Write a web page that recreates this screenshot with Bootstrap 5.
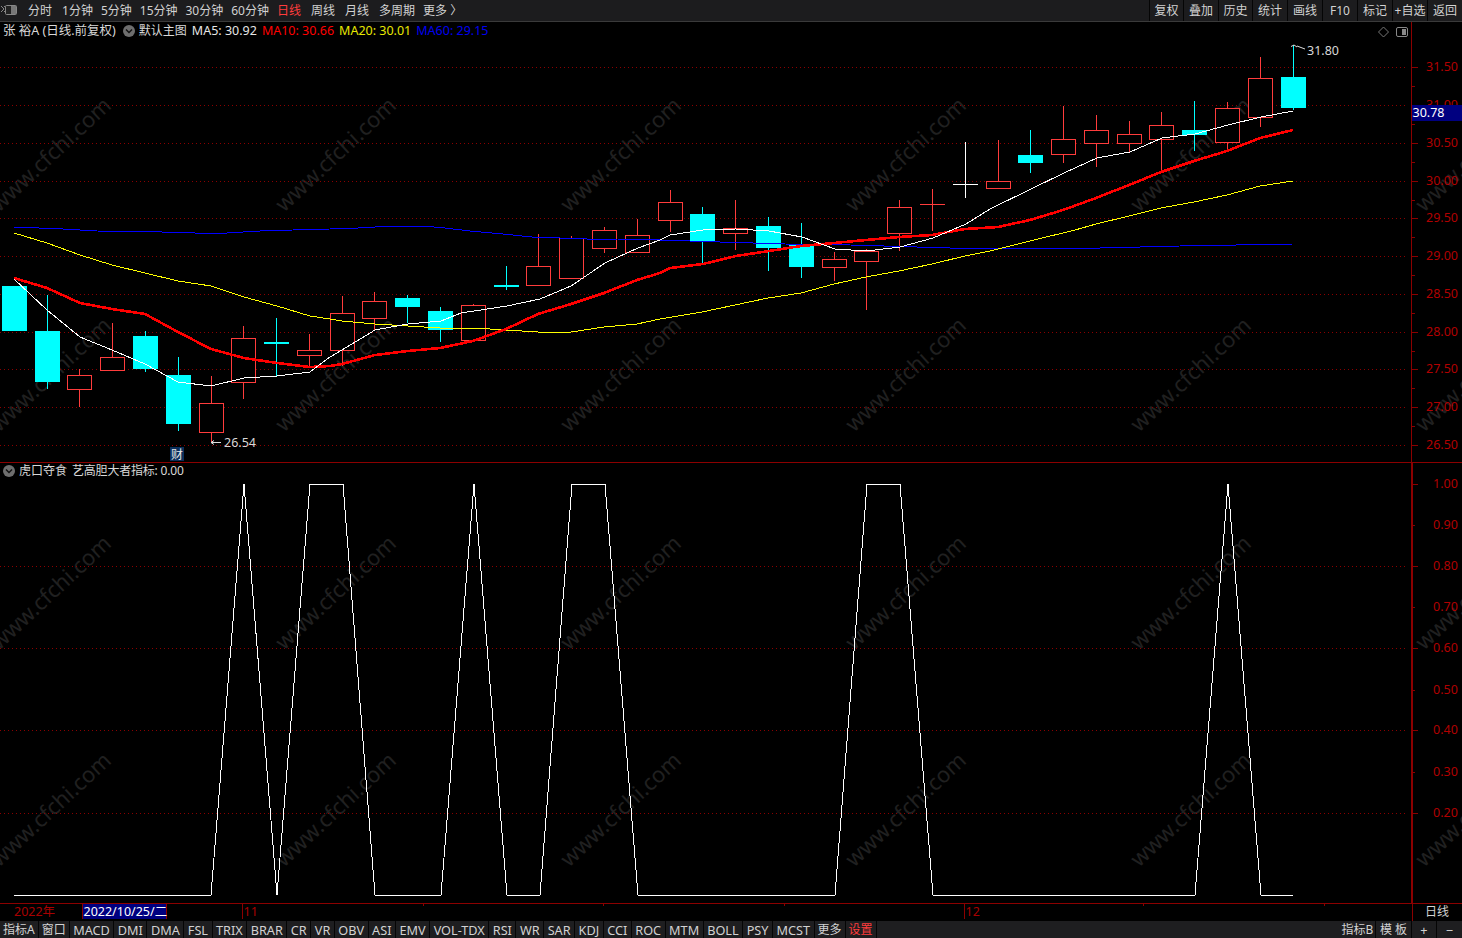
<!DOCTYPE html>
<html lang="zh">
<head>
<meta charset="utf-8">
<title>张裕A 日线</title>
<link href="https://cdn.jsdelivr.net/npm/bootstrap@5.3.0/dist/css/bootstrap.min.css" rel="stylesheet">
<style>
html,body{margin:0;background:#000;height:938px;overflow:hidden}
body,.btn,svg text{font-family:"Noto Sans","Noto Sans CJK SC",sans-serif;font-size:12.5px}
.tk-top{height:21px;background:#1c1c1e;color:#d2d2d2;line-height:20px}
.tk-rule{height:1px;background:#3a3a3a}
.tk-logo{width:18px;height:21px;margin-right:10px}
.tk-gapbtn{margin-right:8px}
.tk-gapwide{margin-right:10px}
.btn.tk-plain{padding:0;border:0;border-radius:0;color:#d2d2d2;font-size:12px;line-height:20px;white-space:nowrap}
.btn.tk-red{color:#ff3c3c}
.btn.tk-sep{border-left:1px solid #050505}
.tk-rbtn{height:21px;text-align:center}
.w34{width:34px}.w35{width:35px}.w36{width:36px}.w25{width:25px}
.tk-panel{height:440px}
.tk-panel svg{display:block}
.tk-line{height:1px;background:#8b0000}
.tk-head{left:3px;height:18px;color:#d8d8d8;line-height:18px;white-space:nowrap}
.tk-head.one{top:0}
.tk-head.two{top:-1px}
.tk-round{width:12px;height:12px;margin:0 4px 0 7px}
.tk-zh{font-size:12px}
.tk-tight{letter-spacing:-.2px}
.c-w{color:#e6e6e6}.c-r{color:#f00}.c-y{color:#e8e800}.c-b{color:#0000f0}
.gap-ma{margin-left:5px}
.tk-timesvg{display:block}
.tk-bottom{height:18px;background:#1e1e20}
.btn.tk-tab{padding:0 3.5px;border:0;border-right:1px solid #050505;border-radius:0;color:#d2d2d2;font-size:12.7px;line-height:18px;height:18px;white-space:nowrap}
.btn.tk-tab.tk-zh{font-size:12px;padding:0 3px}
.btn.tk-tab.tk-red{color:#ff3c3c}
.btn.tk-tab.tk-last{border-right:0}
.tk-tools{position:absolute;top:3px;right:52px}
</style>
</head>
<body>
<div class="d-flex flex-column">
  <div class="tk-top d-flex justify-content-between">
    <div class="d-flex align-items-center">
      <svg class="tk-logo" viewBox="0 0 18 21"><path d="M1 6l3 3-3 3M4 6l3 3-3 3" fill="none" stroke="#888"/><rect x="5.5" y="5.5" width="11" height="9" rx="1" fill="#222" stroke="#888"/><rect x="11" y="6" width="5" height="8" fill="#777"/></svg>
      <button class="btn tk-plain tk-gapwide">分时</button>
      <button class="btn tk-plain tk-gapbtn">1分钟</button>
      <button class="btn tk-plain tk-gapbtn">5分钟</button>
      <button class="btn tk-plain tk-gapbtn">15分钟</button>
      <button class="btn tk-plain tk-gapbtn">30分钟</button>
      <button class="btn tk-plain tk-gapbtn">60分钟</button>
      <button class="btn tk-plain tk-red tk-gapwide">日线</button>
      <button class="btn tk-plain tk-gapwide">周线</button>
      <button class="btn tk-plain tk-gapwide">月线</button>
      <button class="btn tk-plain tk-gapbtn">多周期</button>
      <button class="btn tk-plain">更多 〉</button>
    </div>
    <div class="d-flex">
      <button class="btn tk-plain tk-rbtn tk-sep w34">复权</button>
      <button class="btn tk-plain tk-rbtn tk-sep w35">叠加</button>
      <button class="btn tk-plain tk-rbtn tk-sep w34">历史</button>
      <button class="btn tk-plain tk-rbtn tk-sep w35">统计</button>
      <button class="btn tk-plain tk-rbtn tk-sep w35">画线</button>
      <button class="btn tk-plain tk-rbtn tk-sep w35">F10</button>
      <button class="btn tk-plain tk-rbtn tk-sep w35">标记</button>
      <button class="btn tk-plain tk-rbtn tk-sep w35">+自选</button>
      <button class="btn tk-plain tk-rbtn tk-sep w35">返回</button>
    </div>
  </div>
  <div class="tk-rule"></div>

  <div class="tk-panel position-relative">
    <svg id="mainChart" width="1462" height="440" viewBox="0 22 1462 440"></svg>
    <div class="tk-head one position-absolute d-flex align-items-center">
      <span>张 裕A (日线.前复权)</span>
      <svg class="tk-round" viewBox="0 0 12 12"><circle cx="6" cy="6" r="6" fill="#6e6e6e"/><path d="M3 4.6l3 3 3-3" fill="none" stroke="#111" stroke-width="1.4"/></svg>
      <span class="tk-zh">默认主图</span>
      <span class="c-w gap-ma">MA5: 30.92</span>
      <span class="c-r gap-ma">MA10: 30.66</span>
      <span class="c-y gap-ma">MA20: 30.01</span>
      <span class="c-b gap-ma">MA60: 29.15</span>
    </div>
    <svg class="tk-tools" width="40" height="16" viewBox="0 0 40 16"><path d="M13.5 2l5 5-5 5-5-5z" fill="none" stroke="#777"/><rect x="26.5" y="2.5" width="11" height="9" rx="1.5" fill="none" stroke="#888"/><rect x="32" y="4" width="4" height="6" fill="#888"/></svg>
  </div>
  <div class="tk-line"></div>

  <div class="tk-panel position-relative">
    <svg id="subChart" width="1462" height="440" viewBox="0 463 1462 440"></svg>
    <div class="tk-head two position-absolute d-flex align-items-center">
      <svg class="tk-round ms-0" viewBox="0 0 12 12"><circle cx="6" cy="6" r="6" fill="#6e6e6e"/><path d="M3 4.6l3 3 3-3" fill="none" stroke="#111" stroke-width="1.4"/></svg>
      <span class="tk-zh">虎口夺食</span>
      <span class="gap-ma tk-zh tk-tight">艺高胆大者指标: 0.00</span>
    </div>
  </div>
  <div class="tk-line"></div>

  <svg class="tk-timesvg" width="1462" height="17" viewBox="0 904 1462 17">
    <text x="14" y="916" fill="#a80000">2022年</text>
    <rect x="83" y="904" width="84" height="15" fill="#000080"/>
    <path d="M82.5 904v15M166.5 904v15M242.5 904v15M964.5 904v15M423.5 904v2M603.5 904v2M784.5 904v2M1143.5 904v2M1324.5 904v2M1412.5 904v17" stroke="#8b0000" fill="none"/>
    <text x="83.5" y="916" fill="#fff">2022/10/25/二</text>
    <text x="243.5" y="916" fill="#a80000">11</text>
    <text x="965.5" y="916" fill="#a80000">12</text>
    <text x="1425" y="916" fill="#d2d2d2" style="font-size:12px">日线</text>
  </svg>

  <div class="tk-bottom d-flex justify-content-between">
    <div class="d-flex" id="tabs">
      <button class="btn tk-tab tk-zh">指标A</button><button class="btn tk-tab tk-zh">窗口</button><button class="btn tk-tab">MACD</button><button class="btn tk-tab">DMI</button><button class="btn tk-tab">DMA</button><button class="btn tk-tab">FSL</button><button class="btn tk-tab">TRIX</button><button class="btn tk-tab">BRAR</button><button class="btn tk-tab">CR</button><button class="btn tk-tab">VR</button><button class="btn tk-tab">OBV</button><button class="btn tk-tab">ASI</button><button class="btn tk-tab">EMV</button><button class="btn tk-tab">VOL-TDX</button><button class="btn tk-tab">RSI</button><button class="btn tk-tab">WR</button><button class="btn tk-tab">SAR</button><button class="btn tk-tab">KDJ</button><button class="btn tk-tab">CCI</button><button class="btn tk-tab">ROC</button><button class="btn tk-tab">MTM</button><button class="btn tk-tab">BOLL</button><button class="btn tk-tab">PSY</button><button class="btn tk-tab">MCST</button><button class="btn tk-tab tk-zh">更多</button><button class="btn tk-tab tk-zh tk-red">设置</button>
    </div>
    <div class="d-flex">
      <button class="btn tk-tab tk-zh tk-sep w36 px-0">指标B</button>
      <button class="btn tk-tab tk-zh w36 px-0">模 板</button>
      <button class="btn tk-tab w25 px-0">+</button>
      <button class="btn tk-tab tk-last w25 px-0">−</button>
    </div>
  </div>
</div>

<script>
// [cx, kind, top, bottom, high, low]  kind: r red hollow, c cyan, w white doji
var K=[
[14,'c',286,331,286,331],[47,'c',331,382,295,389],[79,'r',375,389,369,407],[112,'r',357,370,323,370],[145,'c',336,369,331,372],
[178,'c',375,424,357,431],[211,'r',403,432,376,442],[243,'r',338,382,326,399],[276,'c',342,343,318,376],[309,'r',350,355,334,367],
[342,'r',313,350,296,366],[374,'r',301,318,292,330],[407,'c',298,307,295,323],[440,'c',311,330,307,342],[473,'r',305,340,304,341],
[506,'c',285,287,266,290],[538,'r',266,285,234,266],[571,'r',238,278,236,278],[604,'r',230,248,227,253],[637,'r',235,252,219,235],
[670,'r',202,220,190,232],[702,'c',214,241,207,263],[735,'r',228,233,200,250],[768,'c',226,248,217,271],[801,'c',244,267,223,278],
[834,'r',259,267,252,281],[866,'r',251,261,249,310],[899,'r',207,233,200,251],[932,'r',204,204,189,231],[965,'w',184,184,142,198],
[998,'r',181,188,140,188],[1030,'c',155,163,130,173],[1063,'r',139,154,106,163],[1096,'r',130,143,115,167],[1129,'r',134,143,121,153],
[1161,'r',125,139,112,170],[1194,'c',130,135,101,151],[1227,'r',108,142,102,150],[1260,'r',78,117,57,127],[1293,'c',77,108,45,110]
];
var MA5=[[14,279],[47,310],[80,337],[112,350],[145,364],[178,382],[211,386],[244,378],[277,376],[310,372],[330,357],[342,350],[375,330],[408,324],[441,321],[461,313],[474,311],[507,306],[540,299],[571,286],[605,263],[638,248],[660,240],[670,235],[703,230],[736,229],[769,231],[802,237],[835,249],[867,251],[900,247],[933,238],[966,224],[990,209],[1031,189],[1064,173],[1097,158],[1130,152],[1162,138],[1195,134],[1228,125],[1261,117],[1293,111]];
var MA10=[[14,278],[47,288],[80,303],[112,309],[145,314],[178,332],[211,349],[244,358],[277,363],[310,367],[330,366],[342,364],[375,355],[408,351],[440,348],[473,341],[506,329],[538,314],[571,304],[604,293],[637,280],[660,273],[670,268],[703,264],[736,256],[769,251],[801,246],[834,243],[866,240],[899,237],[932,235],[965,229],[998,227],[1030,220],[1063,210],[1096,198],[1129,185],[1161,172],[1194,161],[1227,151],[1260,138],[1293,130]];
var MA20=[[14,233],[47,243],[80,255],[112,265],[145,273],[178,281],[211,286],[244,297],[277,306],[310,316],[330,319],[342,321],[375,324],[408,326],[440,328],[473,328],[506,330],[538,332],[571,332],[604,327],[637,324],[660,319],[702,312],[735,305],[768,298],[801,293],[834,284],[866,277],[899,271],[932,264],[965,256],[990,251],[1030,241],[1075,230],[1096,224],[1129,216],[1161,208],[1194,202],[1227,195],[1260,186],[1293,181]];
var MA60=[[14,227],[63,229],[97,231],[162,232],[195,233],[227,233],[260,231],[293,230],[330,229],[358,228],[392,226],[423,226],[445,228],[470,231],[503,234],[532,237],[560,238],[587,239],[617,239],[660,240],[720,242],[785,244],[850,245],[917,247],[950,248],[1100,248],[1180,246],[1293,244]];
var SUB=[[14,895],[211,895],[244,484],[277,895],[310,484],[343,484],[375,895],[441,895],[474,484],[507,895],[540,895],[572,484],[605,484],[638,895],[835,895],[867,484],[900,484],[933,895],[1195,895],[1228,484],[1261,895],[1293,895]];
var RED='#ff3c3c',GRID='#8b0000',AX='#b00000';
function pl(p,c,w){return '<polyline points="'+p.map(function(q){return q.join(',')}).join(' ')+'" fill="none" stroke="'+c+'" stroke-width="'+w+'" shape-rendering="crispEdges"/>';}
function wm(rows){var s='';rows.forEach(function(y){[-1,284,569,854,1139,1424].forEach(function(x){s+='<text transform="translate('+x+' '+y+') rotate(-43)" fill="#202020" style="font-size:22px">www.cfchi.com</text>';});});return s;}
function hl(y){return '<line x1="0" x2="1408" y1="'+y+'" y2="'+y+'" stroke="'+GRID+'" stroke-dasharray="1 3" shape-rendering="crispEdges"/>';}
function tick(y,len){return '<path d="M1412 '+y+'h'+len+'" stroke="'+GRID+'" shape-rendering="crispEdges"/>';}
// main
var s=wm([213,433]);
var labs=['31.50','31.00','30.50','30.00','29.50','29.00','28.50','28.00','27.50','27.00','26.50'];
labs.forEach(function(t,i){var y=Math.round(67.3+37.75*i)+.5;s+=hl(y)+tick(y,6)+tick(y+19,3)+'<text x="1426" y="'+(y+3.5)+'" fill="'+AX+'">'+t+'</text>';});
s+='<path d="M1411.5 22v440" stroke="'+GRID+'" shape-rendering="crispEdges"/>';
K.forEach(function(k){var x=k[0]+.5,col=k[1]=='r'?RED:k[1]=='c'?'#0ff':'#fff';
 s+='<g shape-rendering="crispEdges">';
 s+='<path d="M'+x+' '+k[4]+'V'+k[2]+'M'+x+' '+k[3]+'V'+k[5]+'" stroke="'+col+'"/>';
 if(k[1]=='c'&&k[0]==14)s+='<rect x="2" y="286" width="25" height="45" fill="#0ff"/>';
 else if(k[1]=='c')s+='<rect x="'+(k[0]-12)+'" y="'+k[2]+'" width="25" height="'+Math.max(k[3]-k[2],2)+'" fill="#0ff"/>';
 else if(k[2]==k[3])s+='<path d="M'+(k[0]-12)+' '+(k[2]+.5)+'h25M'+x+' '+k[2]+'v1" stroke="'+col+'"/>';
 else s+='<rect x="'+(k[0]-12+.5)+'" y="'+(k[2]+.5)+'" width="24" height="'+(k[3]-k[2])+'" fill="#000" stroke="'+col+'"/>';
 s+='</g>';});
s+=pl(MA60,'#0000ff',1)+pl(MA20,'#ffff00',1)+pl(MA10,'#ff0000',2.6)+pl(MA5,'#ffffff',1);
s+='<path d="M1294 45l-3 1.5M1294 45l3 2M1297 46l8 3" stroke="#ddd" fill="none"/><text x="1307" y="55" fill="#d8d8d8">31.80</text>';
s+='<path d="M211 442.5h10M211 442.5l3-2M211 442.5l3 2" stroke="#ddd" fill="none"/><text x="224" y="447" fill="#d8d8d8">26.54</text>';
s+='<rect x="170" y="447" width="14" height="14" fill="#0b2f5c"/><text x="171" y="459" fill="#e8e8e8" style="font-size:12px">财</text>';
s+='<rect x="1412" y="105" width="50" height="16" fill="#000080"/><text x="1412.5" y="116.5" fill="#fff">30.78</text>';
document.getElementById('mainChart').innerHTML=s;
// sub
s=wm([651,868]);
[[ '1.00',484,1],['0.90',525,0],['0.80',566,1],['0.70',607,0],['0.60',648,1],['0.50',690,0],['0.40',730,1],['0.30',772,0],['0.20',813,1]].forEach(function(a){var y=a[1]+.5;
 if(a[2]&&a[1]!=484)s+=hl(y);
 s+=tick(y,a[2]?6:3)+'<text x="1433" y="'+(y+3)+'" fill="'+AX+'">'+a[0]+'</text>';});
s+='<rect x="1411" y="463" width="2" height="440" fill="'+GRID+'"/>';
s+=pl(SUB,'#ffffff',1);
document.getElementById('subChart').innerHTML=s;
</script>
<script src="https://cdn.jsdelivr.net/npm/bootstrap@5.3.0/dist/js/bootstrap.bundle.min.js"></script>
</body>
</html>
